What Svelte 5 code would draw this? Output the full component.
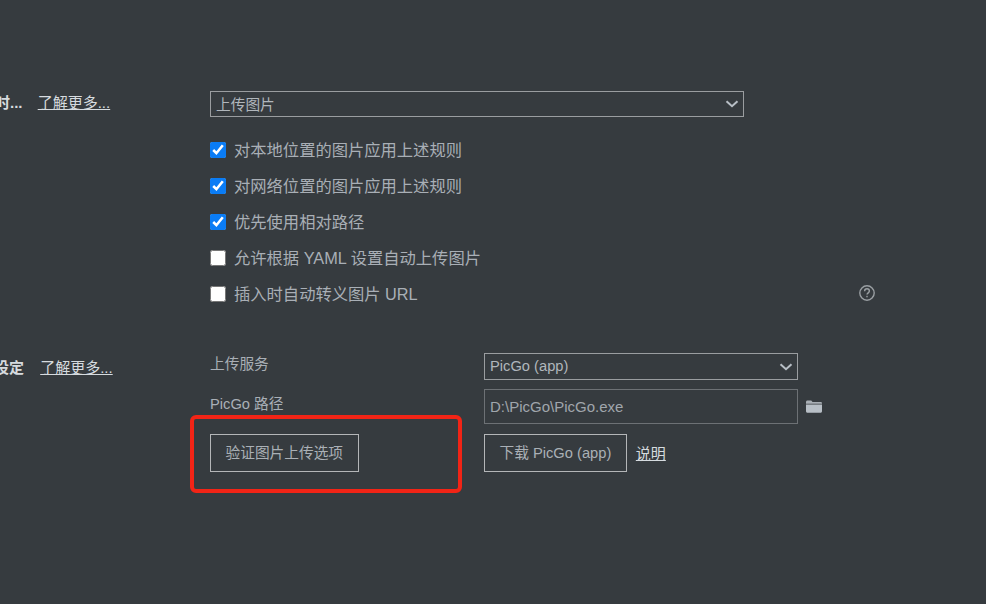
<script>
	const options = [
		{ text: '对本地位置的图片应用上述规则', checked: true },
		{ text: '对网络位置的图片应用上述规则', checked: true },
		{ text: '优先使用相对路径', checked: true },
		{ text: '允许根据 YAML 设置自动上传图片', checked: false },
		{ text: '插入时自动转义图片 URL', checked: false, help: true }
	];
</script>

<div class="page">
	<section class="first">
		<div class="side">
			<span class="title t1">插入图片时...</span>
			<span class="more m1">了解更多...</span>
		</div>
		<div class="main">
			<div class="select wide">
				<span>上传图片</span>
				<svg class="chev" width="14" height="8" viewBox="0 0 14 8"><path d="M1.5 1.2 7 6.2l5.5-5" fill="none" stroke="#b8bfc6" stroke-width="2" /></svg>
			</div>
			<div class="checks">
				{#each options as opt}
					<label class="check">
						<input type="checkbox" checked={opt.checked} />
						<span>{opt.text}</span>
						{#if opt.help}
							<svg class="help" width="18" height="18" viewBox="0 0 18 18">
								<circle cx="9" cy="9" r="7.2" fill="none" stroke="#9a9fa3" stroke-width="1.4" />
								<path d="M6.6 7.2c0-1.5 1.1-2.4 2.4-2.4s2.4.9 2.4 2.2c0 1.8-2.4 1.9-2.4 3.6" fill="none" stroke="#9a9fa3" stroke-width="1.4" />
								<rect x="8.3" y="11.8" width="1.4" height="1.5" fill="#9a9fa3" />
							</svg>
						{/if}
					</label>
				{/each}
			</div>
		</div>
	</section>

	<section class="second">
		<div class="side">
			<span class="title t2">图像上传设定</span>
			<span class="more m2">了解更多...</span>
		</div>
		<div class="form">
			<span class="lab">上传服务</span>
			<div class="select service">
				<span>PicGo (app)</span>
				<svg class="chev" width="14" height="8" viewBox="0 0 14 8"><path d="M1.5 1.2 7 6.2l5.5-5" fill="none" stroke="#b8bfc6" stroke-width="2" /></svg>
			</div>
			<span class="lab lab2">PicGo 路径</span>
			<div class="path-row">
				<div class="path">D:\PicGo\PicGo.exe</div>
				<svg class="folder" width="16" height="13" viewBox="0 0 16 13">
					<path d="M0 2.2C0 1.2.6.6 1.5.6h3.8l1.2 1.3h8c.9 0 1.5.5 1.5 1.3v.5H0z" fill="#a9afb5" />
					<path d="M0 4.6h16v6.6c0 .9-.6 1.5-1.5 1.5h-13C.6 12.7 0 12.1 0 11.2z" fill="#b8bfc6" />
				</svg>
			</div>
			<div class="btn-cell"><button class="btn">验证图片上传选项</button></div>
			<div class="btn-cell">
				<button class="btn">下载 PicGo (app)</button>
				<span class="more">说明</span>
			</div>
		</div>
	</section>

	<div class="mark"></div>
</div>

<style>
	:global(body) {
		margin: 0;
		background: #363b3f;
	}
	.page {
		position: relative;
		width: 986px;
		height: 604px;
		overflow: hidden;
		background: #363b3f;
		color: #b8bfc6;
		font-family: 'Liberation Sans', 'Noto Sans CJK SC', sans-serif;
		font-size: 15px;
		padding-top: 91px;
		box-sizing: border-box;
	}
	section {
		display: flex;
	}
	.second {
		margin-top: 44px;
	}
	.side {
		width: 210px;
		flex: none;
		white-space: nowrap;
		line-height: 24px;
	}
	.title {
		font-weight: bold;
		color: #d6dbdf;
		display: inline-block;
	}
	.t1 {
		margin-left: -65px;
	}
	.t2 {
		margin-left: -66px;
		padding-top: 1px;
	}
	.more {
		color: #d6dbdf;
		text-decoration: underline;
		font-size: 15px;
	}
	.m1 {
		margin-left: 11px;
	}
	.m2 {
		margin-left: 12px;
	}
	.main {
		width: 666px;
	}
	.select {
		box-sizing: border-box;
		border: 1px solid #9a9da0;
		display: flex;
		align-items: center;
		justify-content: space-between;
		padding: 0 4px 0 5px;
		font-size: 14.7px;
		color: #b0b6bc;
	}
	.select span {
		padding-bottom: 2px;
	}
	.wide {
		width: 534px;
		height: 26px;
	}
	.chev {
		flex: none;
	}
	.checks {
		margin-top: 14px;
		display: flex;
		flex-direction: column;
	}
	.check {
		display: flex;
		align-items: center;
		height: 36px;
		font-size: 16.3px;
		color: #a9afb6;
	}
	.check input {
		width: 16px;
		height: 16px;
		margin: 0 8px 0 0;
		accent-color: #0a7cf5;
		position: relative;
		top: 1px;
	}
	.help {
		margin-left: auto;
	}
	.form {
		display: grid;
		grid-template-columns: 274px 360px;
		grid-template-rows: 27px 35px 38px;
		row-gap: 9px;
		margin-top: -2px;
	}
	.lab {
		font-size: 14.7px;
		color: #a9afb6;
		line-height: 20px;
		padding-top: 1px;
	}
	.lab2 {
		padding-top: 5px;
	}
	.service {
		width: 314px;
		height: 27px;
	}
	.path-row {
		display: flex;
		align-items: center;
	}
	.path {
		box-sizing: border-box;
		width: 314px;
		height: 35px;
		border: 1px solid #6d7175;
		padding: 0 5px;
		line-height: 33px;
		font-size: 15px;
		color: #a0a6ac;
	}
	.folder {
		margin-left: 8px;
	}
	.btn-cell {
		display: flex;
		align-items: center;
		gap: 9px;
		padding-top: 1px;
	}
	.btn {
		box-sizing: border-box;
		height: 38px;
		padding: 0 14.5px 2px;
		background: transparent;
		border: 1px solid #b4b6b8;
		color: #aab0b6;
		font-family: inherit;
		font-size: 14.7px;
	}
	.mark {
		position: absolute;
		left: 190px;
		top: 415px;
		width: 272px;
		height: 78px;
		box-sizing: border-box;
		border: 4px solid #f22416;
		border-radius: 6px;
	}
</style>
